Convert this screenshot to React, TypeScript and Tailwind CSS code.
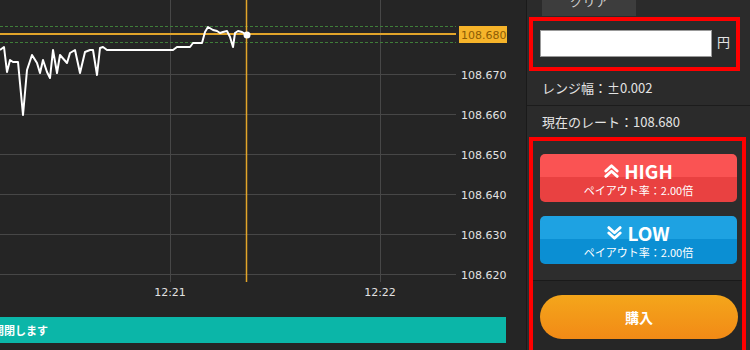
import React from 'react';

const JP = { fontFamily: '"Noto Sans CJK JP", "Noto Sans", sans-serif' };

// price line, traced in chart pixels
const path: [number, number][] = [
    [0, 50], [4, 47], [7, 72], [10, 60], [13, 62], [18, 62], [23, 115], [27, 70], [32, 55], [37, 63],
    [40, 73], [43, 60], [47, 72], [50, 78], [53, 50], [57, 73], [60, 55], [67, 63], [70, 53], [75, 50],
    [80, 73], [85, 52], [90, 50], [93, 50], [97, 75], [100, 48], [103, 47], [107, 50], [173, 50],
    [177, 47], [190, 47], [193, 43], [202, 43], [205, 32], [208, 27], [213, 30], [217, 31], [220, 33],
    [223, 32], [227, 31], [230, 37], [233, 47], [235, 33], [238, 31], [242, 32], [247, 35],
];

const priceRows = [
    { y: 74.5, label: '108.670' },
    { y: 114.5, label: '108.660' },
    { y: 154.5, label: '108.650' },
    { y: 194.5, label: '108.640' },
    { y: 234.5, label: '108.630' },
    { y: 274.5, label: '108.620' },
];

const Chart: React.FC = () => (
    <svg width={527} height={312} className="block" style={{ fontFamily: '"DejaVu Sans", sans-serif' }}>
        {priceRows.map((r) => (
            <g key={r.label}>
                <line x1={0} x2={456} y1={r.y} y2={r.y} stroke="#474747" strokeWidth={1} />
                <text x={461} y={r.y + 4} fontSize={11} fill="#e2e2e2">{r.label}</text>
            </g>
        ))}
        <line x1={170.5} x2={170.5} y1={0} y2={282} stroke="#474747" />
        <line x1={380.5} x2={380.5} y1={0} y2={282} stroke="#474747" />
        <text x={170} y={296} fontSize={11} fill="#e2e2e2" textAnchor="middle">12:21</text>
        <text x={380} y={296} fontSize={11} fill="#e2e2e2" textAnchor="middle">12:22</text>

        <line x1={0} x2={456} y1={26.5} y2={26.5} stroke="#3f7d3a" strokeDasharray="3 2" />
        <line x1={0} x2={456} y1={42.5} y2={42.5} stroke="#3f7d3a" strokeDasharray="3 2" />
        <line x1={0} x2={456} y1={34} y2={34} stroke="#e2a52a" strokeWidth={2} />
        <line x1={246.5} x2={246.5} y1={0} y2={282} stroke="#e2a52a" strokeWidth={1.5} />

        <polyline
            points={path.map(([x, y]) => `${x},${y}`).join(' ')}
            fill="none"
            stroke="#ffffff"
            strokeWidth={2}
            strokeLinejoin="round"
        />
        <circle cx={247} cy={35} r={3.5} fill="#ffffff" />

        <rect x={459} y={26} width={48} height={17} fill="#f6b42a" />
        <text x={461} y={38.5} fontSize={11} fill="#8d5d05">108.680</text>
    </svg>
);

// double chevron, pointing up or down
const Chevrons: React.FC<{ up: boolean }> = ({ up }) => (
    <svg width={15} height={14} viewBox="0 0 15 14" className={up ? '' : 'rotate-180'}>
        <polyline points="1.8,7 7.5,1.8 13.2,7" fill="none" stroke="#fff" strokeWidth={2.8} strokeLinecap="round" strokeLinejoin="round" />
        <polyline points="1.8,12.4 7.5,7.2 13.2,12.4" fill="none" stroke="#fff" strokeWidth={2.8} strokeLinecap="round" strokeLinejoin="round" />
    </svg>
);

const TradeButton: React.FC<{ kind: 'high' | 'low' }> = ({ kind }) => {
    const high = kind === 'high';
    return (
        <button
            className={`w-[197px] h-[48px] rounded-[5px] overflow-hidden flex flex-col text-white ${
                high
                    ? 'bg-[linear-gradient(#fa5353_0%,#fa5353_48%,#e94141_48%,#e94141_100%)]'
                    : 'bg-[linear-gradient(#1ea2e2_0%,#1ea2e2_48%,#0b8fd3_48%,#0b8fd3_100%)]'
            }`}
        >
            <div className="flex items-center justify-center gap-[5px] pt-[4px] h-[29px]">
                <Chevrons up={high} />
                <span className="text-[19px] font-bold leading-none">{high ? 'HIGH' : 'LOW'}</span>
            </div>
            <div className="text-[11px] leading-none text-center pt-[2px]">ペイアウト率：2.00倍</div>
        </button>
    );
};

export default function App() {
    return (
        <div className="w-[750px] h-[350px] flex overflow-hidden bg-[#252525]" style={JP}>
            {/* chart column */}
            <div className="w-[527px] h-full flex flex-col border-r border-[#1a1a1a] bg-[#252525]">
                <Chart />
                <div className="mt-[5px] mr-[20px] h-[26px] bg-[#0bb6a8] flex items-center overflow-hidden">
                    <span className="ml-[-7px] text-[11px] font-bold text-white whitespace-nowrap">開閉します</span>
                </div>
            </div>

            {/* order panel */}
            <div className="flex-1 h-full flex flex-col bg-[#2b2b2b] text-[#e4e4e4]">
                <div className="h-[17px] pl-[15px] flex">
                    <div className="w-[94px] h-[16px] bg-[#3d3d3d] overflow-hidden flex justify-center">
                        <span className="text-[13px] leading-none mt-[-6px] text-[#cfcfcf]">クリア</span>
                    </div>
                </div>

                <div className="ml-[2px] w-[211px] h-[54px] border-4 border-[#ff0000] flex items-start pl-[7px] pt-[9px]">
                    <input className="w-[172px] h-[27px] bg-white border border-[#999] outline-none" />
                    <span className="ml-[5px] mt-[5px] text-[13px] leading-none">円</span>
                </div>

                <div className="h-[35px] flex items-center pl-[15px] text-[13px] border-b border-[#1c1c1c]">
                    レンジ幅：±0.002
                </div>
                <div className="h-[31px] flex items-center pl-[15px] text-[13px]">
                    現在のレート：108.680
                </div>

                <div className="ml-[2px] w-[217px] flex-1 border-4 border-b-0 border-[#ff0000] flex flex-col">
                    <div className="h-[140px] pl-[7px] pt-[13px] flex flex-col gap-[14px] bg-[#2d2d2d] border-b border-[#1a1a1a]">
                        <TradeButton kind="high" />
                        <TradeButton kind="low" />
                    </div>
                    <div className="flex-1 bg-[#262626] pl-[7px] pt-[14px]">
                        <button className="w-[198px] h-[44px] rounded-full bg-[linear-gradient(#f4a61b,#f28a16)] text-white text-[14px] font-bold">
                            購入
                        </button>
                    </div>
                </div>
            </div>
        </div>
    );
}
